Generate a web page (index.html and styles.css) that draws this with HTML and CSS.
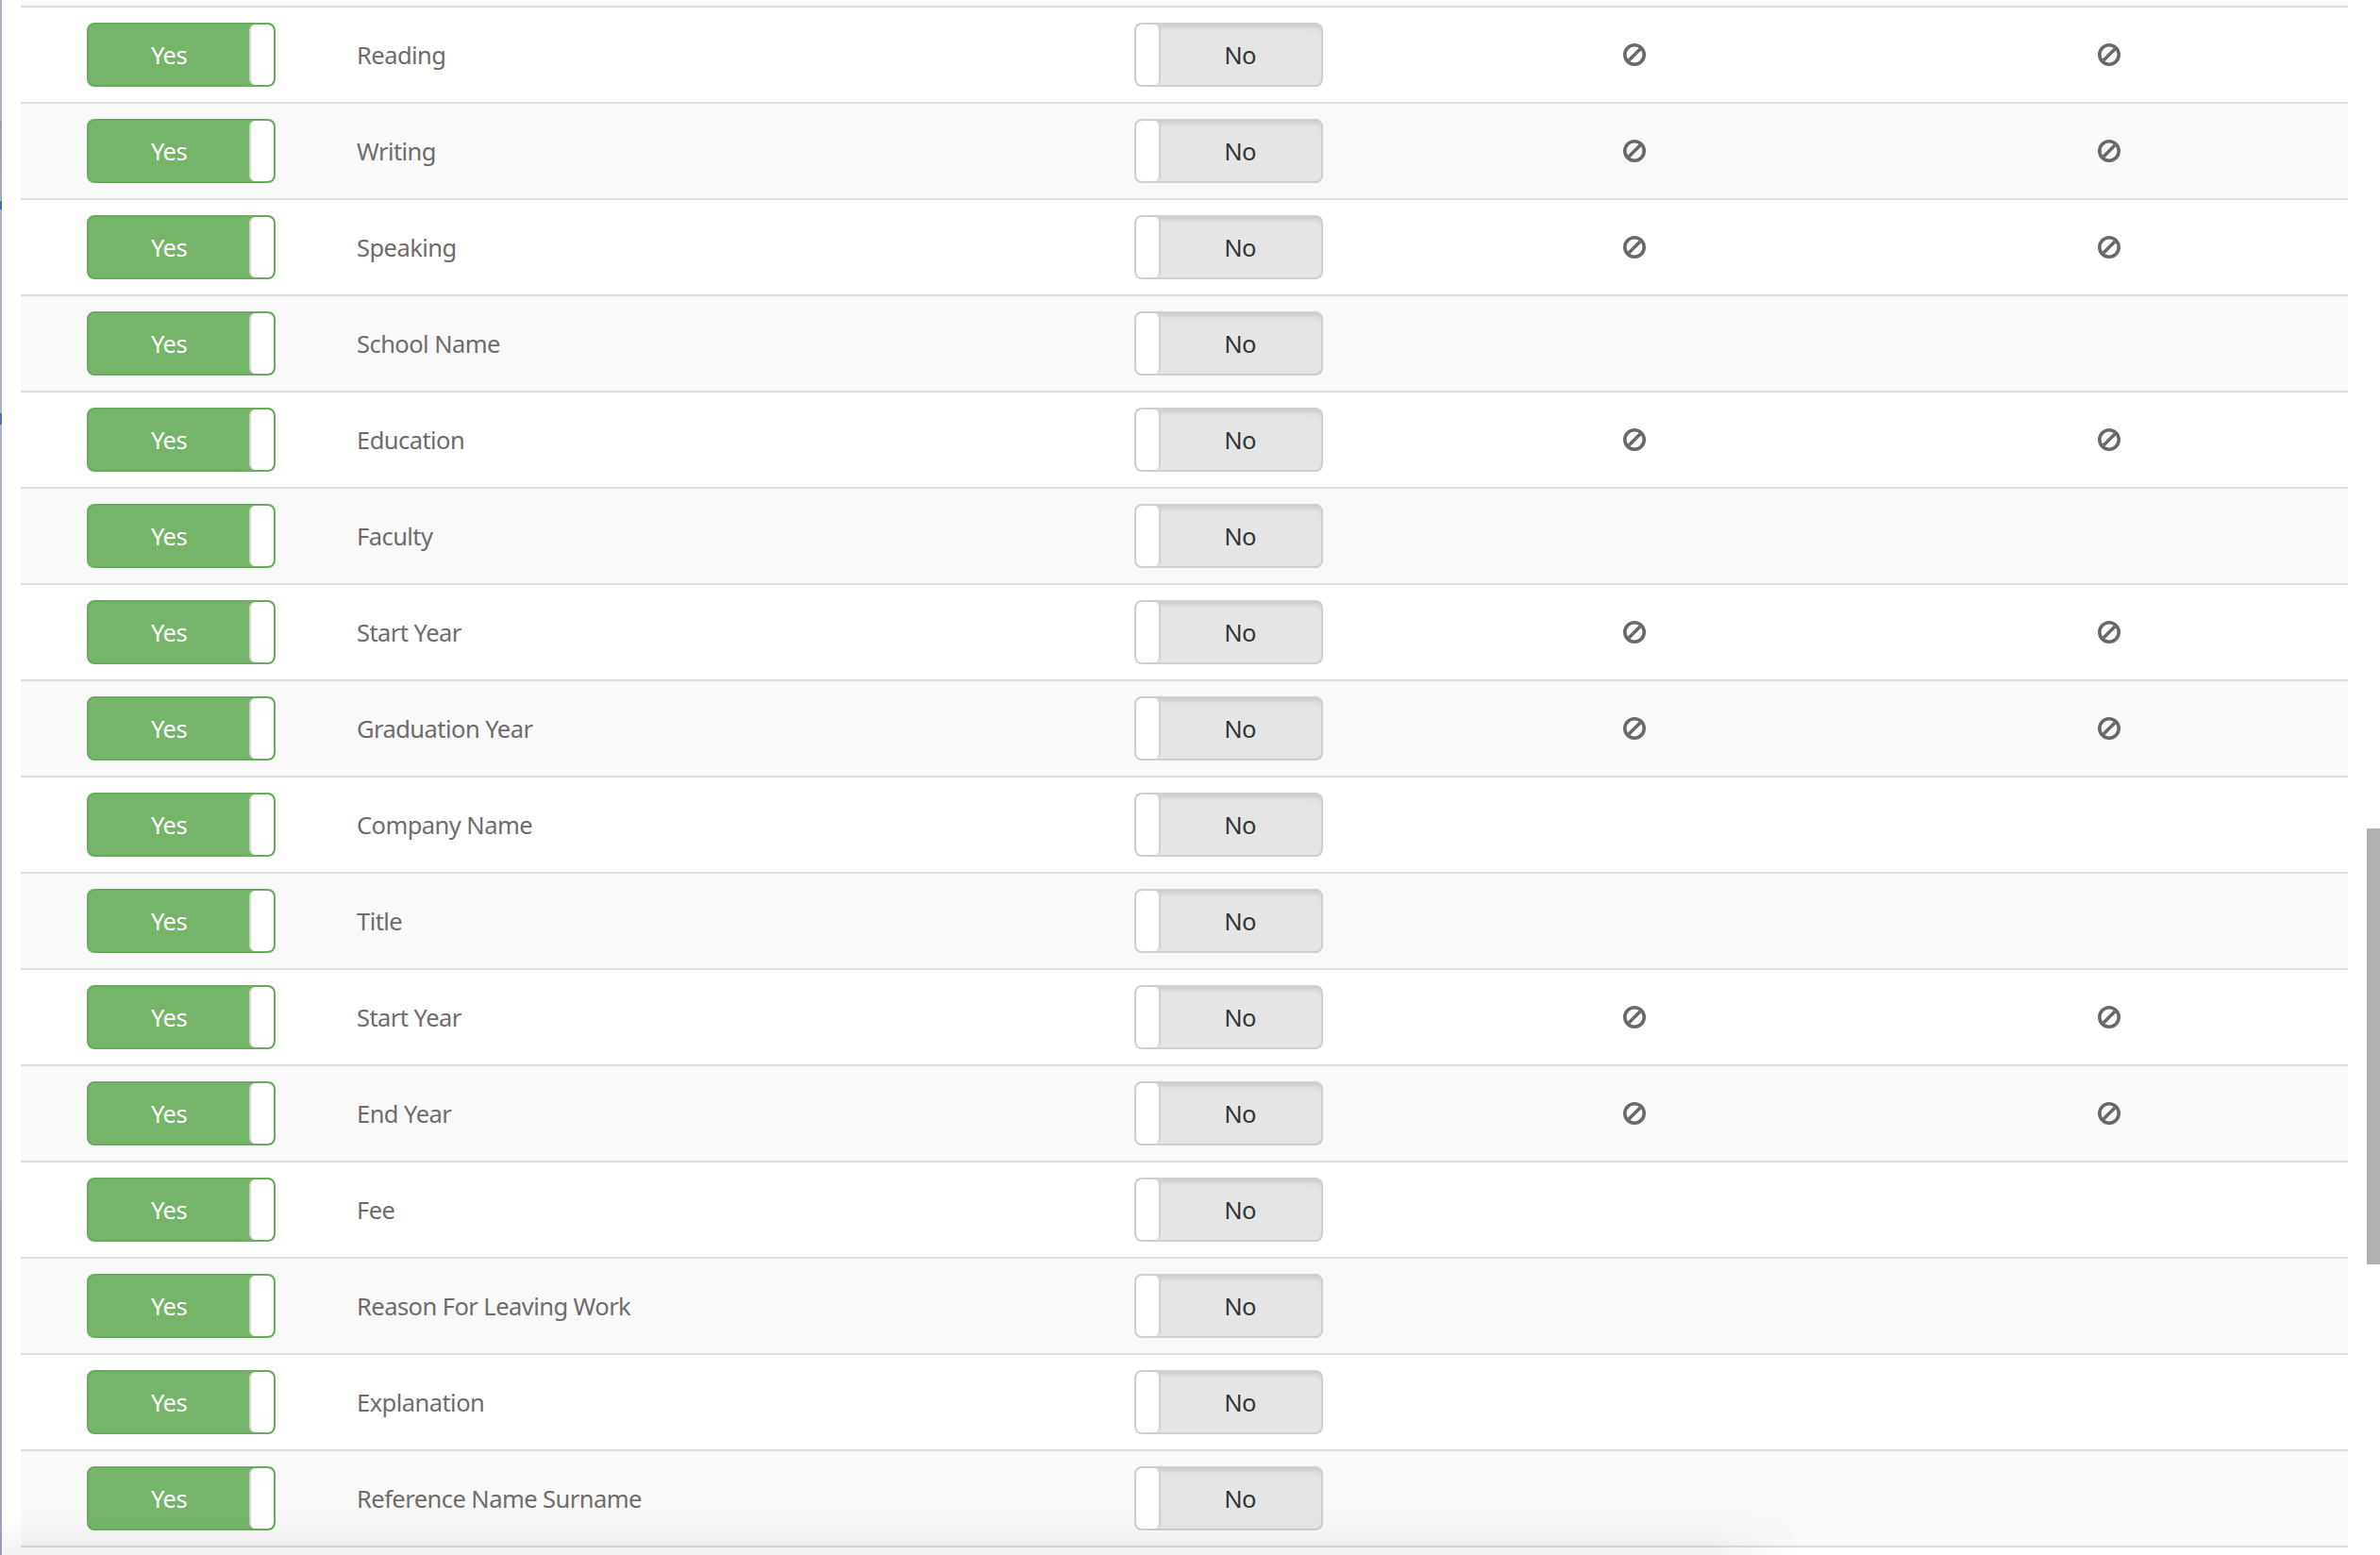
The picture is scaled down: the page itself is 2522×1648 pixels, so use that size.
FILE: index.html
```html
<!DOCTYPE html>
<html lang="en">
<head>
    <meta charset="UTF-8">
    <title>Form Fields</title>
    <link rel="stylesheet" href="styles.css">
</head>
<body>

<div class="window-edge"></div>

<div class="fields">
    <div class="field-row top-stub"></div>
    <div id="rows"></div>
</div>

<div class="scrollbar"></div>
<div class="bottom-shadow"></div>

<script>
    const fields = [
        { name: "Reading", icons: true },
        { name: "Writing", icons: true },
        { name: "Speaking", icons: true },
        { name: "School Name", icons: false },
        { name: "Education", icons: true },
        { name: "Faculty", icons: false },
        { name: "Start Year", icons: true },
        { name: "Graduation Year", icons: true },
        { name: "Company Name", icons: false },
        { name: "Title", icons: false },
        { name: "Start Year", icons: true },
        { name: "End Year", icons: true },
        { name: "Fee", icons: false },
        { name: "Reason For Leaving Work", icons: false },
        { name: "Explanation", icons: false },
        { name: "Reference Name Surname", icons: false }
    ];

    const banIcon = '<svg class="ban" viewBox="0 0 24 24"><circle cx="12" cy="12" r="10.2" fill="none" stroke="currentColor" stroke-width="3.6"/><path d="M6 18 18 6" stroke="currentColor" stroke-width="3.6"/></svg>';

    const rows = document.getElementById('rows');

    fields.forEach(field => {
        const row = document.createElement('div');
        row.classList.add('field-row');
        row.innerHTML =
            '<div class="cell-first"><div class="switch switch-on"><span class="switch-text">Yes</span><span class="knob"></span></div></div>' +
            '<div class="cell-name">' + field.name + '</div>' +
            '<div class="cell-second"><div class="switch switch-off"><span class="knob"></span><span class="switch-text">No</span></div></div>' +
            '<div class="cell-icon">' + (field.icons ? banIcon : '') + '</div>' +
            '<div class="cell-icon">' + (field.icons ? banIcon : '') + '</div>';
        rows.appendChild(row);
    });
</script>

</body>
</html>
```

FILE: styles.css
```css
html, body {
    height: 100%;
    overflow: hidden;
}
body {
    margin: 0;
    background-color: #fff;
    font-family: "Noto Sans", Lato, sans-serif;
    font-size: 25.5px;
    letter-spacing: -0.55px;
    color: #6f6b6b;
    position: relative;
}
.fields {
    margin-left: 22px;
    width: 2466px;
}
.field-row {
    display: grid;
    grid-template-columns: 356px 824px 278px 504px 502px;
    align-items: center;
    height: 100px;
    border-bottom: 2px solid #dedede;
    background-color: #fff;
}
.top-stub {
    height: 6px;
    background-color: #f9f9f9;
}
#rows .field-row:nth-child(even) {
    background-color: #f9f9f9;
}
.cell-first {
    padding-left: 70px;
}
.cell-icon {
    display: flex;
    justify-content: center;
    color: #6a6767;
}
.ban {
    width: 24px;
    height: 24px;
    display: block;
}
.switch {
    display: flex;
    box-sizing: border-box;
    width: 200px;
    height: 68px;
    border: 2px solid;
    border-radius: 8px;
    overflow: hidden;
}
.switch-on {
    background-color: #75b569;
    border-color: #6aab5f;
    color: #fff;
}
.switch-off {
    background-color: #e5e5e5;
    border-color: #cfcfcf;
    color: #333;
    box-shadow: inset 0 6px 6px -4px #c4c4c4;
}
.switch-text {
    flex: 1;
    text-align: center;
    line-height: 64px;
}
.switch-off .switch-text {
    padding-right: 2px;
}
.knob {
    width: 24px;
    background-color: #fff;
    border-radius: 6px;
}
.switch-on .knob {
    border-left: 2px solid #cfd6cd;
}
.switch-off .knob {
    border-right: 2px solid #cfcfcf;
}
.window-edge {
    position: absolute;
    left: 0;
    top: 0;
    bottom: 0;
    width: 2px;
    background: linear-gradient(#a9b4c2 128px, #98a2b0 128px, #a3aebc 213px, #3f6ea8 213px, #3f6ea8 222px, #a9b4c2 222px, #a9b4c2 438px, #5a6fb0 438px, #5a6fb0 450px, #a9b4c2 450px, #a9b4c2 1273px, #9ba6b8 1273px);
}
.scrollbar {
    position: absolute;
    left: 2508px;
    top: 878px;
    width: 14px;
    height: 462px;
    background-color: #b0b0b0;
}
.bottom-shadow {
    position: absolute;
    left: 0;
    top: 1598px;
    width: 1910px;
    height: 50px;
    background: linear-gradient(rgba(0, 0, 0, 0), rgba(0, 0, 0, 0.015) 50%, rgba(0, 0, 0, 0.055));
    -webkit-mask-image: linear-gradient(to right, #000 1810px, transparent 1910px);
    mask-image: linear-gradient(to right, #000 1810px, transparent 1910px);
}
```
